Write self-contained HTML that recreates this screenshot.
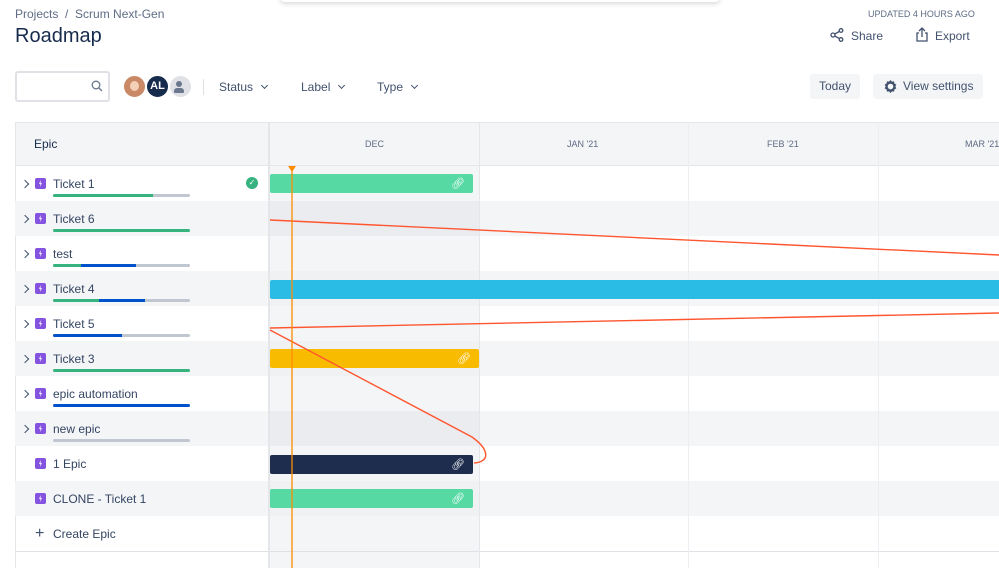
<!DOCTYPE html>
<html><head><meta charset="utf-8"><style>
*{margin:0;padding:0;box-sizing:border-box}
body{width:999px;height:568px;overflow:hidden;background:#fff;font-family:"Liberation Sans",sans-serif;color:#172b4d;position:relative}
.a{position:absolute;white-space:nowrap}
.t{font-size:12px;color:#344563}
.row{position:absolute;left:15px;width:984px;height:35px}
.pb{position:absolute;left:53px;width:137px;height:3px;background:#c1c7d0;border-radius:2px;overflow:hidden}
.ic{position:absolute;left:35px;width:11px;height:11px;background:#8453e0;border-radius:2px}
.ic:after{content:"";position:absolute;left:4px;top:2px;width:3px;height:7px;background:#fff;clip-path:polygon(60% 0,0 55%,50% 55%,30% 100%,100% 45%,50% 45%)}
.ch{position:absolute;left:22px;width:6px;height:6px;border-right:1.6px solid #42526e;border-bottom:1.6px solid #42526e;transform:rotate(-45deg)}
.bar{position:absolute;height:19px;border-radius:2px}
.lk{position:absolute;right:8px;top:3px;color:#fff;font-size:11px}
</style></head><body>
<div class="a" style="left:280px;top:-8px;width:440px;height:10px;border-radius:6px;box-shadow:0 2px 5px rgba(0,0,0,.15)"></div>
<div class="a t" style="left:15px;top:7px;color:#5e6c84">Projects&nbsp;&nbsp;/&nbsp;&nbsp;Scrum Next-Gen</div>
<div class="a" style="left:15px;top:25px;font-size:20px;color:#172b4d">Roadmap</div>
<div class="a" style="left:868px;top:9px;font-size:9px;color:#5e6c84">UPDATED 4 HOURS AGO</div>
<svg class="a" style="left:830px;top:28px" width="14" height="14" viewBox="0 0 14 14" fill="none" stroke="#42526e" stroke-width="1.3"><circle cx="3" cy="7" r="2"/><circle cx="11" cy="2.5" r="1.8"/><circle cx="11" cy="11.5" r="1.8"/><path d="M4.8 6 9.3 3.4M4.8 8 9.3 10.6"/></svg>
<div class="a t" style="left:851px;top:29px;font-size:12px;color:#42526e">Share</div>
<svg class="a" style="left:915px;top:27px" width="14" height="15" viewBox="0 0 14 15" fill="none" stroke="#42526e" stroke-width="1.3"><path d="M4 6H2v8h10V6h-2M7 10V1M4 4l3-3 3 3"/></svg>
<div class="a t" style="left:935px;top:29px;color:#42526e">Export</div>
<div class="a" style="left:15px;top:71px;width:95px;height:31px;border:2px solid #dfe1e6;border-radius:3px"></div>
<svg class="a" style="left:91px;top:80px" width="12" height="12" viewBox="0 0 12 12" fill="none" stroke="#6b778c" stroke-width="1.3"><circle cx="5" cy="5" r="3.8"/><path d="M8 8l3 3"/></svg>
<div class="a" style="left:122px;top:74px;width:25px;height:25px;border-radius:50%;background:#c98866;border:2px solid #fff"><div style="margin:5px 6px;width:9px;height:10px;border-radius:50%;background:#f4d0b6"></div></div>
<div class="a" style="left:145px;top:74px;width:25px;height:25px;border-radius:50%;background:#172b4d;border:2px solid #fff;color:#fff;font-size:11px;font-weight:bold;text-align:center;line-height:21px">AL</div>
<div class="a" style="left:168px;top:74px;width:25px;height:25px;border-radius:50%;background:#dfe1e6;border:2px solid #fff"><div style="margin:5px 0 0 6px;width:6px;height:6px;border-radius:50%;background:#6b778c"></div><div style="margin:1px 0 0 4px;width:10px;height:5px;border-radius:3px 3px 1px 1px;background:#6b778c"></div></div>
<div class="a" style="left:203px;top:79px;width:1px;height:16px;background:#dfe1e6"></div>
<div class="a t" style="left:219px;top:80px;color:#42526e">Status</div><div class="ch" style="left:262px;top:83px;width:5px;height:5px;transform:rotate(45deg)"></div>
<div class="a t" style="left:301px;top:80px;color:#42526e">Label</div><div class="ch" style="left:339px;top:83px;width:5px;height:5px;transform:rotate(45deg)"></div>
<div class="a t" style="left:377px;top:80px;color:#42526e">Type</div><div class="ch" style="left:412px;top:83px;width:5px;height:5px;transform:rotate(45deg)"></div>
<div class="a" style="left:810px;top:74px;width:50px;height:25px;background:#f4f5f7;border-radius:3px;font-size:12px;text-align:center;line-height:25px;color:#42526e">Today</div>
<div class="a" style="left:873px;top:74px;width:110px;height:25px;background:#f4f5f7;border-radius:3px;font-size:12px;line-height:25px;color:#42526e;padding-left:30px">View settings</div>
<svg class="a" style="left:883px;top:79px" width="15" height="15" viewBox="0 0 16 16"><path fill="#42526e" d="M8 1l1.5 1.8 2.3-.3.4 2.3 2 1.2-1 2 1 2-2 1.2-.4 2.3-2.3-.3L8 15l-1.5-1.8-2.3.3-.4-2.3-2-1.2 1-2-1-2 2-1.2.4-2.3 2.3.3z"/><circle cx="8" cy="8" r="3" fill="#f4f5f7"/></svg>
<!-- grid -->
<div class="a" style="left:15px;top:122px;width:984px;height:44px;background:#f4f5f7;border-top:1px solid #e4e6ea;border-bottom:1px solid #e4e6ea"></div>
<div class="a" style="left:15px;top:122px;width:1px;height:446px;background:#e4e6ea"></div>
<div class="a" style="left:34px;top:137px;font-size:12px;color:#172b4d">Epic</div>
<div class="a" style="left:365px;top:139px;font-size:9px;color:#5e6c84">DEC</div>
<div class="a" style="left:567px;top:139px;font-size:9px;color:#5e6c84">JAN '21</div>
<div class="a" style="left:767px;top:139px;font-size:9px;color:#5e6c84">FEB '21</div>
<div class="a" style="left:965px;top:139px;font-size:9px;color:#5e6c84">MAR '21</div>
<div class="row" style="top:201px;background:#f4f5f7"></div>
<div class="row" style="top:271px;background:#f4f5f7"></div>
<div class="row" style="top:341px;background:#f4f5f7"></div>
<div class="row" style="top:411px;background:#f4f5f7"></div>
<div class="row" style="top:481px;background:#f4f5f7"></div>
<div class="a" style="left:269px;top:166px;width:210px;height:402px;background:rgba(235,236,240,.55)"></div>
<div class="a" style="left:269px;top:201px;width:210px;height:35px;background:#ebecf0"></div>
<div class="a" style="left:269px;top:411px;width:210px;height:35px;background:#ebecf0"></div>
<div class="a" style="left:15px;top:551px;width:984px;height:1px;background:#dfe1e6"></div>
<div class="a" style="left:268px;top:122px;width:2px;height:446px;background:#e4e6ea"></div>
<div class="a" style="left:479px;top:122px;width:1px;height:446px;background:#e4e6ea"></div>
<div class="a" style="left:688px;top:122px;width:1px;height:446px;background:#eceef1"></div>
<div class="a" style="left:878px;top:122px;width:1px;height:446px;background:#eceef1"></div>
<!-- rows -->
<div class="ch" style="top:181px"></div><div class="ic" style="top:178px"></div><div class="a t" style="left:53px;top:177px">Ticket 1</div>
<div class="pb" style="top:194px"><div style="width:100px;height:3px;background:#36b37e"></div></div>
<div class="a" style="left:246px;top:177px;width:12px;height:12px;border-radius:50%;background:#36b37e;color:#fff;font-size:8px;text-align:center;line-height:12px">✓</div>
<div class="ch" style="top:216px"></div><div class="ic" style="top:213px"></div><div class="a t" style="left:53px;top:212px">Ticket 6</div>
<div class="pb" style="top:229px;background:#36b37e"></div>
<div class="ch" style="top:251px"></div><div class="ic" style="top:248px"></div><div class="a t" style="left:53px;top:247px">test</div>
<div class="pb" style="top:264px"><div style="position:absolute;left:0;width:28px;height:3px;background:#36b37e"></div><div style="position:absolute;left:28px;width:55px;height:3px;background:#0052cc"></div></div>
<div class="ch" style="top:286px"></div><div class="ic" style="top:283px"></div><div class="a t" style="left:53px;top:282px">Ticket 4</div>
<div class="pb" style="top:299px"><div style="position:absolute;left:0;width:46px;height:3px;background:#36b37e"></div><div style="position:absolute;left:46px;width:46px;height:3px;background:#0052cc"></div></div>
<div class="ch" style="top:321px"></div><div class="ic" style="top:318px"></div><div class="a t" style="left:53px;top:317px">Ticket 5</div>
<div class="pb" style="top:334px"><div style="width:69px;height:3px;background:#0052cc"></div></div>
<div class="ch" style="top:356px"></div><div class="ic" style="top:353px"></div><div class="a t" style="left:53px;top:352px">Ticket 3</div>
<div class="pb" style="top:369px;background:#36b37e"></div>
<div class="ch" style="top:391px"></div><div class="ic" style="top:388px"></div><div class="a t" style="left:53px;top:387px">epic automation</div>
<div class="pb" style="top:404px;background:#0052cc"></div>
<div class="ch" style="top:426px"></div><div class="ic" style="top:423px"></div><div class="a t" style="left:53px;top:422px">new epic</div>
<div class="pb" style="top:439px"></div>
<div class="ic" style="top:458px"></div><div class="a t" style="left:53px;top:457px">1 Epic</div>
<div class="ic" style="top:493px"></div><div class="a t" style="left:53px;top:492px">CLONE - Ticket 1</div>
<div class="a" style="left:35px;top:526px;font-size:16px;color:#42526e;line-height:16px">+</div><div class="a t" style="left:53px;top:527px">Create Epic</div>
<!-- bars -->
<div class="bar" style="left:270px;top:174px;width:203px;background:#57d9a3"><span class="lk">🔗︎</span></div>
<div class="bar" style="left:270px;top:280px;width:729px;background:#2abce5;border-radius:2px 0 0 2px"></div>
<div class="bar" style="left:270px;top:349px;width:209px;background:#f9bb00"><span class="lk">🔗︎</span></div>
<div class="bar" style="left:270px;top:455px;width:203px;background:#1e2c4e"><span class="lk">🔗︎</span></div>
<div class="bar" style="left:270px;top:489px;width:203px;background:#57d9a3"><span class="lk">🔗︎</span></div>
<svg class="a" style="left:0;top:0" width="999" height="568"><g fill="none" stroke="#ff5630" stroke-width="1.4"><path d="M270 220 L999 255"/><path d="M270 328 L999 313"/><path d="M270 330 L472 437 C490 450 490 462 474 463"/></g>
<path d="M292 170V568" stroke="#ff8b00" stroke-width="1.3"/><path d="M288 166h8l-4 6z" fill="#ff8b00"/></svg>
</body></html>
